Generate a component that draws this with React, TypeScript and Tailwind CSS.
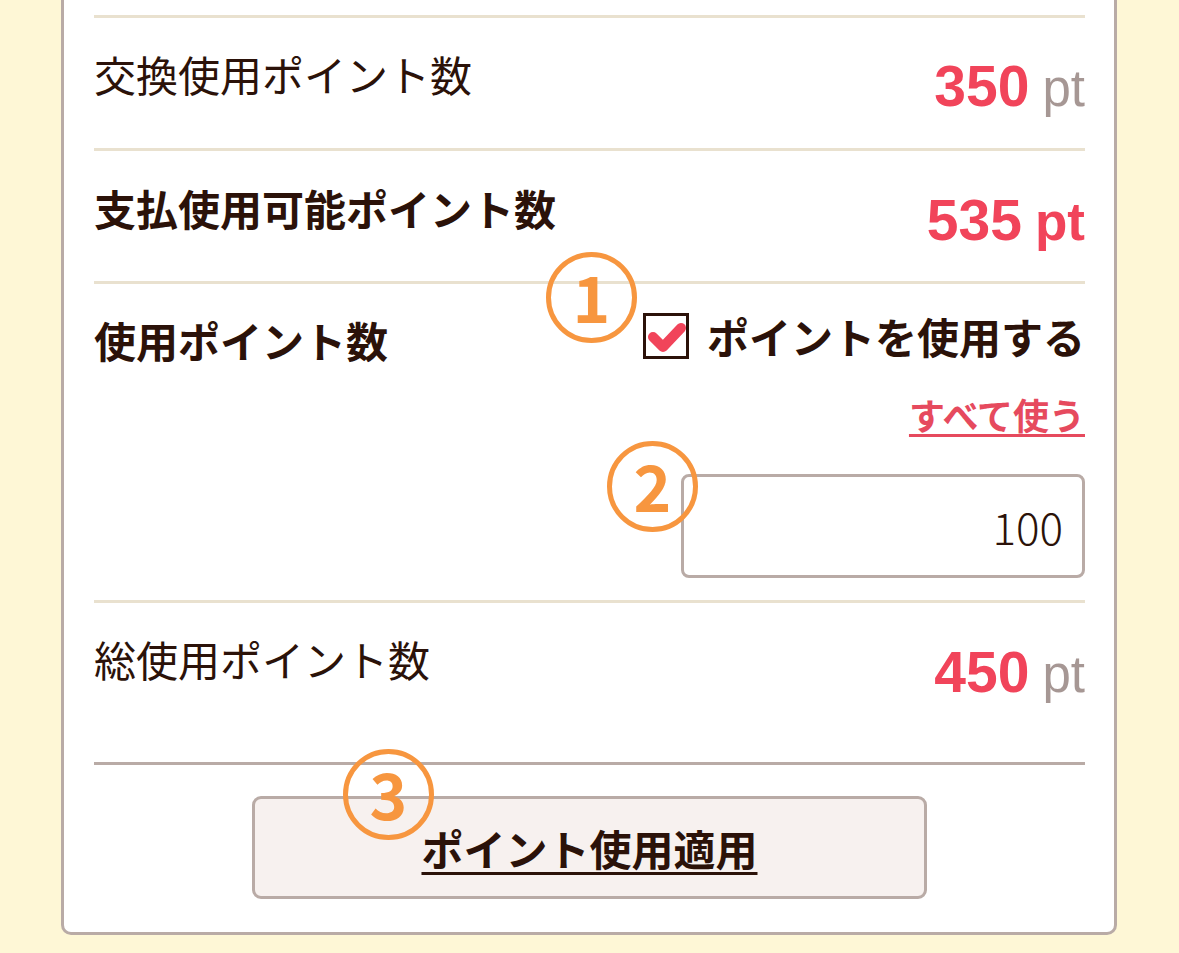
import React from 'react'

const jp = "font-['Noto_Sans_CJK_JP',sans-serif]"
const num = "font-['Liberation_Sans',Arial,sans-serif]"

function Value({ amount, boldUnit }: { amount: string; boldUnit?: boolean }) {
  return (
    <div className={`${num} flex items-baseline gap-[13px] leading-[56px]`}>
      <span className="text-[57px] font-bold text-[#f1445a]">{amount}</span>
      {boldUnit ? (
        <span className="text-[53px] font-bold text-[#f1445a]">pt</span>
      ) : (
        <span className="text-[51px] text-[#a69794]">pt</span>
      )}
    </div>
  )
}

function Marker({ n, className }: { n: string; className: string }) {
  return (
    <div
      className={`absolute flex h-[91px] w-[91px] items-center justify-center rounded-full border-[5px] border-[#f7963f] ${jp} text-[64px] font-bold leading-none text-[#f7963f] ${className}`}
    >
      <span className="-mt-[6px]">{n}</span>
    </div>
  )
}

export default function App() {
  return (
    <div className="min-h-screen bg-[#fef7d6] pl-[61px] pr-[62px] pb-[20px] text-[#2b1209]">
      <div className="relative rounded-b-[10px] border-x-[3px] border-b-[3px] border-[#b9aba6] bg-white pl-[30px] pr-[29px] pt-[15px] pb-[33px]">
        {/* exchange points */}
        <div className="flex items-start justify-between border-t-[3px] border-[#e9e1cf] pt-[35px] pb-[31px]">
          <p className={`${jp} text-[42px] leading-[42px]`}>交換使用ポイント数</p>
          <div className="mt-[5px]">
            <Value amount="350" />
          </div>
        </div>

        {/* available points */}
        <div className="flex items-start justify-between border-t-[3px] border-[#e9e1cf] pt-[36px] pb-[31px]">
          <p className={`${jp} text-[42px] font-bold leading-[42px]`}>支払使用可能ポイント数</p>
          <div className="mt-[5px]">
            <Value amount="535" boldUnit />
          </div>
        </div>

        {/* points to use */}
        <div className="flex items-start justify-between border-t-[3px] border-[#e9e1cf] pt-[29px] pb-[22px]">
          <p className={`${jp} mt-[6px] text-[42px] font-bold leading-[42px]`}>使用ポイント数</p>
          <div className="flex flex-col items-end">
            <label className="flex items-center gap-[18px]">
              <span className="flex h-[46px] w-[46px] items-center justify-center border-[3px] border-[#2b1209] bg-white">
                <svg viewBox="0 0 40 40" className="h-[40px] w-[40px]">
                  <path
                    d="M7 21 L17 31 L35 12"
                    fill="none"
                    stroke="#f1445a"
                    strokeWidth="10"
                    strokeLinecap="round"
                    strokeLinejoin="round"
                  />
                </svg>
              </span>
              <span className={`${jp} text-[42px] font-bold leading-[42px]`}>ポイントを使用する</span>
            </label>
            <a
              className={`${jp} mt-[37px] text-[36px] font-bold leading-[36px] text-[#e64a5e] underline decoration-[3px] underline-offset-[4px]`}
            >
              すべて使う
            </a>
            <div
              className={`${jp} mt-[42px] flex h-[104px] w-[404px] items-center justify-end rounded-[8px] border-[3px] border-[#b9aba6] pr-[19px] text-[44px] font-light`}
            >
              100
            </div>
          </div>
        </div>

        {/* total */}
        <div className="flex items-start justify-between border-t-[3px] border-[#e9e1cf] pt-[35px] pb-[59px]">
          <p className={`${jp} text-[42px] leading-[42px]`}>総使用ポイント数</p>
          <div className="mt-[6px]">
            <Value amount="450" />
          </div>
        </div>

        <div className="border-t-[3px] border-[#b9aba6] pt-[31px]">
          <button
            className={`${jp} mx-auto flex h-[103px] w-[675px] items-center justify-center rounded-[9px] border-[3px] border-[#b9aba6] bg-[#f7f1ef] text-[42px] font-bold leading-[42px] text-[#2b1209] underline decoration-[3px] underline-offset-[6px]`}
          >
            ポイント使用適用
          </button>
        </div>

        <Marker n="1" className="left-[482px] top-[252px]" />
        <Marker n="2" className="left-[543px] top-[441px]" />
        <Marker n="3" className="left-[279px] top-[749px]" />
      </div>
    </div>
  )
}
